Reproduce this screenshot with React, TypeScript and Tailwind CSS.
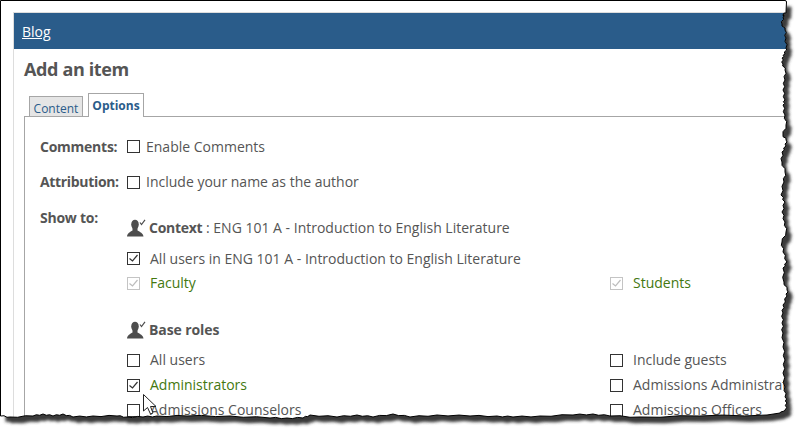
const right: [number, number][] = [
  [786, 12], [784, 14], [783, 17], [782, 24], [785, 30], [786, 38], [786, 48], [785, 54], [782, 58], [783, 64], [785, 70],
  [785, 80], [783, 90], [785, 100], [783, 105], [785, 115], [786, 125], [783, 135], [786, 140], [786, 146], [782, 152],
  [782, 162], [785, 172], [784, 182], [781, 195], [785, 202], [782, 212], [785, 222], [786, 232], [782, 242], [783, 252],
  [787, 262], [783, 268], [784, 282], [787, 290], [787, 296], [783, 305], [783, 313], [782, 323], [783, 333], [783, 347],
  [785, 360], [783, 373], [785, 387], [785, 397], [787, 403], [785, 410], [780, 413],
];

const bottom: [number, number][] = [
  [767, 415], [700, 416], [640, 417], [610, 416], [593, 414], [573, 415], [540, 416], [513, 417], [497, 416], [470, 416],
  [437, 415], [410, 417], [393, 414], [373, 417], [357, 415], [337, 417], [310, 415], [303, 418], [287, 418], [270, 418],
  [230, 416], [187, 416], [157, 416], [143, 417], [127, 417], [117, 416], [93, 416], [73, 417], [63, 414], [53, 416],
  [43, 414], [33, 416], [10, 417], [1, 416],
];

// small alternating notches between the traced points, so the edge looks torn
function torn(points: [number, number][], axis: 0 | 1, size: number) {
  const out: string[] = [];
  points.forEach((p, i) => {
    out.push(`${p[0]} ${p[1]}`);
    const next = points[i + 1];
    if (!next) return;
    const step = i % 2 === 0 ? size : -size;
    const a: [number, number] = [(p[0] * 2 + next[0]) / 3, (p[1] * 2 + next[1]) / 3];
    const b: [number, number] = [(p[0] + next[0] * 2) / 3, (p[1] + next[1] * 2) / 3];
    a[axis] += step;
    b[axis] -= step;
    out.push(`${a[0]} ${a[1]}`, `${b[0]} ${b[1]}`);
  });
  return out.join(" L");
}

const paper = `M0.5 0.5 L785 0.5 Q786.5 0.5 786.5 2 L${torn(right, 0, 1)} L${torn(bottom, 1, 0.6)} L0.5 416 Z`;

function TornEdge() {
  return (
    <svg className="absolute inset-0" width="804" height="434" viewBox="0 0 804 434">
      <defs>
        <filter id="blur" x="-5%" y="-5%" width="110%" height="110%">
          <feGaussianBlur stdDeviation="1.8" />
        </filter>
        <clipPath id="outside">
          <path clipRule="evenodd" d={`M0 0H804V434H0Z ${paper}`} />
        </clipPath>
      </defs>
      <path fill="#fff" fillRule="evenodd" d={`M0 0H804V434H0Z ${paper}`} />
      <g clipPath="url(#outside)">
        <path d={paper} fill="#3a3a3a" transform="translate(5 6)" filter="url(#blur)" />
      </g>
      <path d={paper} fill="none" stroke="#000" strokeWidth="1" />
    </svg>
  );
}

function Box({ checked, faded }: { checked?: boolean; faded?: boolean }) {
  return (
    <span
      className={`flex h-[13px] w-[13px] shrink-0 items-center justify-center border bg-white ${
        faded ? "border-[#c4c4c4]" : "border-[#333]"
      }`}
    >
      {checked && (
        <svg width="11" height="11" viewBox="0 0 11 11" fill="none">
          <path d="M1.5 5.5 L4.5 8 L9.5 2" stroke={faded ? "#bdbdbd" : "#333"} strokeWidth="1.2" />
        </svg>
      )}
    </span>
  );
}

function Item({
  label,
  checked,
  faded,
  green,
  flush,
}: {
  label: string;
  checked?: boolean;
  faded?: boolean;
  green?: boolean;
  flush?: boolean;
}) {
  return (
    <div className="flex h-5 items-center gap-[10px] whitespace-nowrap">
      <Box checked={checked} faded={faded} />
      <span className={`${green ? "text-[#44780f]" : ""} ${flush ? "" : "pb-[2px]"}`}>{label}</span>
    </div>
  );
}

function RoleIcon() {
  return (
    <svg width="19" height="18" viewBox="0 0 19 18" className="shrink-0">
      <ellipse cx="8" cy="5.5" rx="3.8" ry="4.8" fill="#4d4d4d" />
      <path d="M5.5 8.5 L5.5 11.5 C3 13 0.5 14 0 17.5 L16.5 17.5 C16 14 13 13 10.5 11.5 L10.5 8.5 Z" fill="#4d4d4d" />
      <path d="M13 3.5 L14.5 5.5 L18 0.8" fill="none" stroke="#4d4d4d" strokeWidth="1.2" />
    </svg>
  );
}

export default function App() {
  return (
    <div
      className="relative h-[434px] w-[804px] overflow-hidden bg-white pl-[13px] pt-3 text-[14px] text-[#555]"
      style={{ fontFamily: '"Open Sans", sans-serif' }}
    >
      <div className="h-[440px] w-[800px] border-l border-t border-[#ddd]">
        <div className="flex h-9 items-center bg-[#2a5c8a] pl-2 text-white">
          <a className="underline">Blog</a>
        </div>

        <h1 className="mb-[11px] ml-[10px] mt-2 text-[18px] font-bold leading-[25px] tracking-[-0.36px]">Add an item</h1>

        {/* Tabs */}
        <div className="relative z-10 ml-[15px] flex h-6 items-end gap-[5px] text-[12px] text-[#2a5c8a]">
          <div className="flex h-[21px] w-[54px] items-center justify-center border border-[#a6a6a6] bg-[#e5e5e5] pt-1">
            Content
          </div>
          <div className="flex h-6 w-[56px] items-center justify-center border border-b-0 border-[#a6a6a6] bg-white font-bold">
            Options
          </div>
        </div>

        {/* Options panel */}
        <div className="-mt-px ml-[10px] border-l border-t border-[#a6a6a6] pl-[15px] pt-[19px]">
          <div className="flex h-5 items-center">
            <div className="w-[87px] font-bold tracking-[-0.25px]">Comments:</div>
            <div className="flex items-center gap-[6px]">
              <Box />
              <span>Enable Comments</span>
            </div>
          </div>
          <div className="mt-4 flex h-5 items-center">
            <div className="w-[87px] pb-[2px] font-bold tracking-[-0.33px]">Attribution:</div>
            <div className="flex items-center gap-[6px]">
              <Box />
              <span className="pb-[2px]">Include your name as the author</span>
            </div>
          </div>

          <div className="mt-[15px] flex items-start">
            <div className="h-5 w-[87px] font-bold tracking-[-0.25px]">Show to:</div>
            <div className="mt-[11px] flex-1">
              <div className="flex h-5 items-center gap-[3px] whitespace-nowrap">
                <RoleIcon />
                <span className="pb-[2px]">
                  <b className="tracking-[-0.28px]">Context</b> : ENG 101 A - Introduction to English Literature
                </span>
              </div>
              <div className="mt-[10px]">
                <Item label="All users in ENG 101 A - Introduction to English Literature" checked flush />
              </div>
              <div className="mt-[5px] grid grid-cols-[483px_1fr]">
                <Item label="Faculty" checked faded green />
                <Item label="Students" checked faded green />
              </div>

              <div className="mt-[27px] flex h-5 items-center gap-[3px]">
                <RoleIcon />
                <b className="pb-[2px] tracking-[-0.1px]">Base roles</b>
              </div>
              <div className="mt-[10px] grid grid-cols-[483px_1fr] gap-y-[5px]">
                <Item label="All users" />
                <Item label="Include guests" />
                <Item label="Administrators" checked green />
                <Item label="Admissions Administrators" />
                <Item label="Admissions Counselors" />
                <Item label="Admissions Officers" />
              </div>
            </div>
          </div>
        </div>
      </div>

      {/* Mouse pointer */}
      <svg className="absolute left-[142px] top-[393px]" width="18" height="24" viewBox="0 0 18 24">
        <path d="M1.5 1.5 L1.5 18 L5.5 14.5 L8.5 21 L11 20 L8.5 13.5 L14 13.5 Z" fill="#fff" stroke="#222" strokeWidth="1" />
      </svg>

      <TornEdge />
    </div>
  );
}
